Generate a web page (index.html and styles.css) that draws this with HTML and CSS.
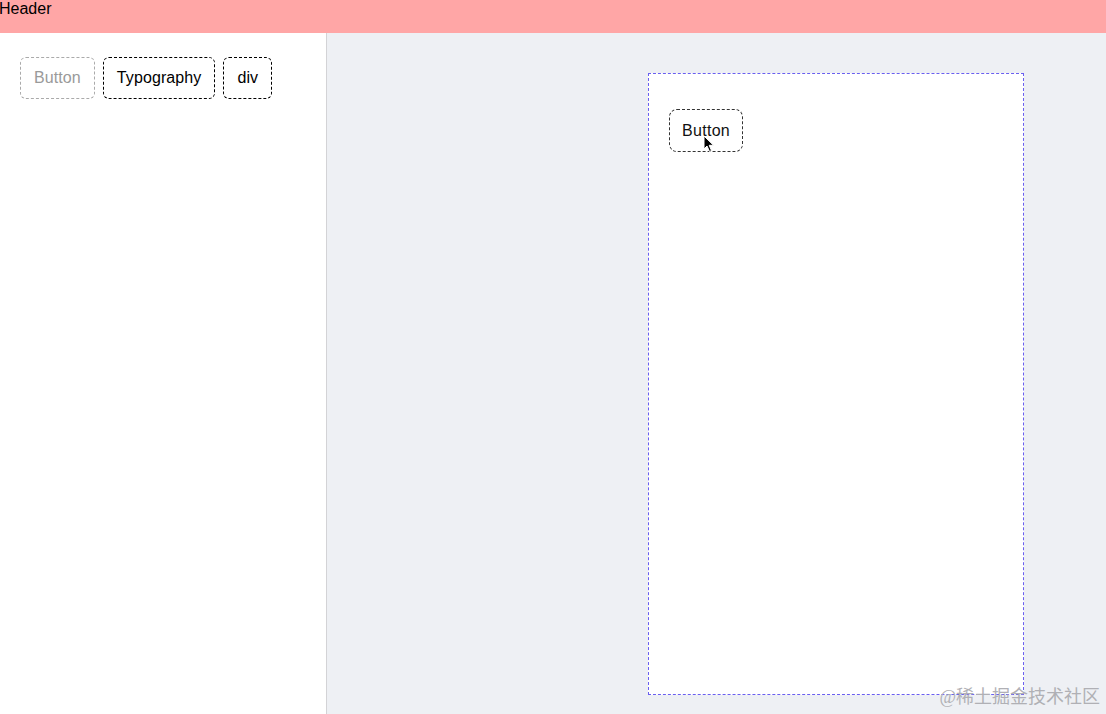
FILE: index.html
```html
<!DOCTYPE html>
<html>
<head>
<meta charset="utf-8">
<link rel="stylesheet" href="styles.css">
</head>
<body>
<div class="app">
  <header class="header">Header</header>
  <div class="main">
    <aside class="sider">
      <div class="palette">
        <div class="chip chip-muted">Button</div>
        <div class="chip">Typography</div>
        <div class="chip">div</div>
      </div>
    </aside>
    <section class="canvas">
      <div class="frame">
        <div class="btn">Button</div>
      </div>
      <svg class="cursor" width="12" height="18" viewBox="0 0 12 18">
        <path d="M1 1 L1 14 L4 11 L6.5 16.5 L8.5 15.6 L6.2 10.3 L10.5 10.3 Z" fill="#000" stroke="#fff" stroke-width="1"/>
      </svg>
      <div class="watermark">@稀土掘金技术社区</div>
    </section>
  </div>
</div>
</body>
</html>
```
FILE: styles.css
```css
html, body {
  margin: 0;
  padding: 0;
  height: 100%;
}
body {
  font-family: "Liberation Sans", Arial, sans-serif;
  font-size: 16px;
  color: #000;
}
.app {
  display: flex;
  flex-direction: column;
  height: 714px;
  overflow: hidden;
}
.header {
  height: 33px;
  background: #ffa6a6;
  line-height: 18px;
  margin-left: -1px;
  flex: none;
}
.main {
  display: flex;
  flex: 1;
  min-height: 0;
}
.sider {
  width: 327px;
  flex: none;
  background: #fff;
  border-right: 1px solid #d3d3d6;
  padding: 24px 20px;
  box-sizing: border-box;
}
.palette {
  display: flex;
  gap: 8px;
}
.chip {
  height: 42px;
  box-sizing: border-box;
  padding: 0 13px;
  border: 1px dashed #000;
  border-radius: 6px;
  display: flex;
  align-items: center;
  line-height: 18px;
  letter-spacing: 0.1px;
}
.chip-muted {
  color: #9a9a9a;
  border-color: #aaaaaa;
}
.canvas {
  flex: 1;
  background: #eef0f4;
  position: relative;
  padding: 40px 0 0 321px;
  box-sizing: border-box;
}
.frame {
  width: 376px;
  height: 622px;
  box-sizing: border-box;
  background: #fff;
  border: 1px dashed #6a5ff0;
  padding: 35px 20px;
}
.btn {
  display: inline-flex;
  align-items: center;
  height: 43px;
  box-sizing: border-box;
  padding: 0 12px;
  border: 1px dashed #333;
  border-radius: 8px;
  color: #111;
  font-size: 16px;
  letter-spacing: 0.3px;
}
.cursor {
  position: absolute;
  left: 376px;
  top: 102px;
}
.watermark {
  position: absolute;
  right: 6px;
  bottom: 6px;
  font-family: "Liberation Serif", "Noto Sans CJK SC", serif;
  font-size: 18px;
  color: #b0b0b5;
}
```
